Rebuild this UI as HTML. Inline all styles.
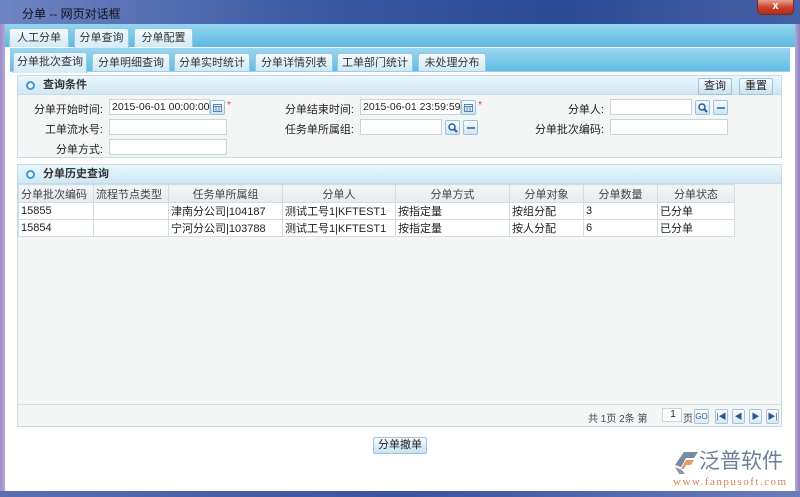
<!DOCTYPE html>
<html><head><meta charset="utf-8"><style>
*{margin:0;padding:0;box-sizing:border-box}
body{width:800px;height:497px;overflow:hidden;position:relative;font-family:"Liberation Sans","Noto Sans CJK SC",sans-serif;font-size:11px;color:#222;background:#5a6fa8}
.a{position:absolute}
#title{left:0;top:0;width:800px;height:24px;background:linear-gradient(90deg,#6f84c2,#3a58a2 40%,#2b4a95 70%,#4760a6);}
#title span{position:absolute;left:22px;top:5px;color:#111;font-size:12px}
#close{left:757px;top:0;width:37px;height:15px;background:linear-gradient(#e9a08e,#c9412a 55%,#b02e1a);border:1px solid #7a2a20;border-top:none;border-radius:0 0 5px 5px;color:#fff;font-weight:bold;text-align:center;font-size:11px;line-height:13px}
#lb{left:0;top:24px;width:5px;height:473px;background:linear-gradient(90deg,#9b8bc7,#b4a5d8)}
#rb{left:795px;top:24px;width:5px;height:473px;background:linear-gradient(90deg,#b4a5d8,#8f7fc0)}
#bb{left:0;top:491px;width:800px;height:6px;background:linear-gradient(90deg,#5b6fb0,#3a539f,#6a7cba)}
#main{left:5px;top:24px;width:790px;height:467px;background:#fff}
#t1{left:5px;top:24px;width:790px;height:23px;background:linear-gradient(#93d6ef,#5db9e2)}
#t2{left:10px;top:48px;width:780px;height:24px;background:linear-gradient(#9bd7ef,#62bce3);border-bottom:1px solid #9ccfe6}
.tab{position:absolute;height:19px;border:1px solid #9cc6de;border-bottom:none;border-radius:3px 3px 0 0;background:linear-gradient(#f4fbfe,#cfe9f7);color:#333;text-align:center;line-height:18px;font-size:11px}
.tab.on{background:linear-gradient(#eaf6fc,#d6edf9);height:22px}
.panel{position:absolute;left:17px;width:765px;border:1px solid #c6dbe6;background:#f4f6f6}
.ph{height:19px;background:linear-gradient(#eaf6fb,#cfe8f5);border-bottom:1px solid #c6dbe6;position:relative;font-weight:bold;color:#333;line-height:19px;padding-left:25px}
.ph i{position:absolute;left:8px;top:5px;width:9px;height:9px;border:2px solid #3a9ad6;border-radius:50%;background:#fff}
.lbl{position:absolute;text-align:right;color:#222}
.inp{position:absolute;height:16px;border:1px solid #c9d4da;background:#fff;font-size:10.5px;line-height:14px;padding-left:2px;overflow:hidden;white-space:nowrap}
.ib{position:absolute;width:15px;height:15px;border:1px solid #9cc2da;background:linear-gradient(#f4fbff,#cfe5f4);border-radius:2px}
.ib svg{position:absolute;left:2px;top:2px}
.star{position:absolute;color:#e33;font-size:10px}
.btn{position:absolute;height:17px;border:1px solid #9fc2d8;border-radius:2px;background:linear-gradient(#f5fbff,#c8e2f3);text-align:center;line-height:15px;font-size:11px;color:#222}
table{position:absolute;left:0;top:19px;border-collapse:collapse;font-size:11px}
td,th{height:16px;border:1px solid #d0dde4;padding:0 2px;white-space:nowrap;overflow:hidden}
th{font-weight:normal;color:#444;background:linear-gradient(#f3f6f7,#e4eaee);height:18px}
td{background:#fff}
.pg{position:absolute;top:244px;height:15px;border:1px solid #a9c3d8;background:linear-gradient(#fff,#d9e9f4);border-radius:2px;font-size:8px;color:#2a5a90;text-align:center;line-height:13px}
</style></head><body>
<div class="a" id="title"><span>分单 -- 网页对话框</span></div>
<div class="a" id="close">x</div>
<div class="a" id="lb"></div><div class="a" id="rb"></div><div class="a" id="bb"></div>
<div class="a" id="main"></div>
<div class="a" id="t1"></div>
<div class="tab" style="left:9px;top:28px;width:60px">人工分单</div>
<div class="tab on" style="left:74px;top:28px;width:55px;height:20px">分单查询</div>
<div class="tab" style="left:134px;top:28px;width:59px">分单配置</div>
<div class="a" id="t2"></div>
<div class="tab on" style="left:13px;top:52px;width:74px;height:21px">分单批次查询</div>
<div class="tab" style="left:92px;top:53px;width:78px;height:18px">分单明细查询</div>
<div class="tab" style="left:174px;top:53px;width:76px;height:18px">分单实时统计</div>
<div class="tab" style="left:255px;top:53px;width:78px;height:18px">分单详情列表</div>
<div class="tab" style="left:337px;top:53px;width:76px;height:18px">工单部门统计</div>
<div class="tab" style="left:418px;top:53px;width:68px;height:18px">未处理分布</div>

<div class="panel" style="top:75px;height:83px">
<div class="ph"><i></i>查询条件</div>
<div class="btn" style="left:680px;top:2px;width:34px">查询</div>
<div class="btn" style="left:721px;top:2px;width:34px">重置</div>
<div class="lbl" style="left:0;top:25px;width:85px">分单开始时间:</div>
<div class="inp" style="left:91px;top:23px;width:101px">2015-06-01 00:00:00</div>
<div class="ib" style="left:192px;top:24px"><svg width="9" height="9"><rect x="0.5" y="1.5" width="8" height="7" fill="none" stroke="#5a86b0"/><path d="M0 3.5H9M3 3v6M6 3v6" stroke="#5a86b0"/></svg></div><div class="star" style="left:209px;top:24px">*</div>
<div class="lbl" style="left:0;top:45px;width:85px">工单流水号:</div>
<div class="inp" style="left:91px;top:43px;width:118px"></div>
<div class="lbl" style="left:0;top:65px;width:85px">分单方式:</div>
<div class="inp" style="left:91px;top:63px;width:118px"></div>
<div class="lbl" style="left:240px;top:25px;width:96px">分单结束时间:</div>
<div class="inp" style="left:342px;top:23px;width:101px">2015-06-01 23:59:59</div>
<div class="ib" style="left:443px;top:24px"><svg width="9" height="9"><rect x="0.5" y="1.5" width="8" height="7" fill="none" stroke="#5a86b0"/><path d="M0 3.5H9M3 3v6M6 3v6" stroke="#5a86b0"/></svg></div><div class="star" style="left:460px;top:24px">*</div>
<div class="lbl" style="left:240px;top:45px;width:96px">任务单所属组:</div>
<div class="inp" style="left:342px;top:43px;width:82px"></div>
<div class="ib" style="left:427px;top:44px"><svg width="10" height="10"><circle cx="4" cy="4" r="3" fill="none" stroke="#2f5f90" stroke-width="1.5"/><path d="M6 6l3 3" stroke="#2f5f90" stroke-width="2"/></svg></div>
<div class="ib" style="left:445px;top:44px"><svg width="10" height="10"><path d="M1 5h8" stroke="#2f5f90" stroke-width="1.5"/></svg></div>
<div class="lbl" style="left:490px;top:25px;width:96px">分单人:</div>
<div class="inp" style="left:592px;top:23px;width:82px"></div>
<div class="ib" style="left:677px;top:24px"><svg width="10" height="10"><circle cx="4" cy="4" r="3" fill="none" stroke="#2f5f90" stroke-width="1.5"/><path d="M6 6l3 3" stroke="#2f5f90" stroke-width="2"/></svg></div>
<div class="ib" style="left:695px;top:24px"><svg width="10" height="10"><path d="M1 5h8" stroke="#2f5f90" stroke-width="1.5"/></svg></div>
<div class="lbl" style="left:490px;top:45px;width:96px">分单批次编码:</div>
<div class="inp" style="left:592px;top:43px;width:118px"></div>
</div>

<div class="panel" style="top:164px;height:263px">
<div class="ph"><i></i>分单历史查询</div>
<table>
<tr><th style="width:75px;text-align:left">分单批次编码</th><th style="width:75px;text-align:left">流程节点类型</th><th style="width:114px">任务单所属组</th><th style="width:113px">分单人</th><th style="width:114px">分单方式</th><th style="width:74px">分单对象</th><th style="width:74px">分单数量</th><th style="width:77px">分单状态</th></tr>
<tr><td>15855</td><td></td><td>津南分公司|104187</td><td>测试工号1|KFTEST1</td><td>按指定量</td><td>按组分配</td><td>3</td><td>已分单</td></tr>
<tr><td>15854</td><td></td><td>宁河分公司|103788</td><td>测试工号1|KFTEST1</td><td>按指定量</td><td>按人分配</td><td>6</td><td>已分单</td></tr>
</table>
<div class="a" style="left:0;top:239px;width:763px;border-top:1px solid #d0dde4"></div>
<div class="a" style="left:570px;top:245px;color:#445;font-size:10px">共 1页 2条 第</div>
<div class="inp" style="left:644px;top:243px;width:20px;height:14px;text-align:center;line-height:12px;font-size:10px">1</div>
<div class="a" style="left:665px;top:245px;color:#445;font-size:10px">页</div>
<div class="pg" style="left:676px;width:15px">GO</div>
<div class="pg" style="left:697px;width:13px">|◀</div>
<div class="pg" style="left:714px;width:13px">◀</div>
<div class="pg" style="left:731px;width:13px">▶</div>
<div class="pg" style="left:748px;width:13px">▶|</div>
</div>

<div class="btn" style="left:373px;top:437px;width:54px;height:17px">分单撤单</div>

<svg class="a" style="left:672px;top:451px" width="28" height="24" viewBox="0 0 28 24"><path d="M12 1 L26 1 L22 7 L14 7 L9 16 L3 14 Z" fill="#7a8aa0"/><path d="M9 18 L14 9 L22 9 L19 14 L14 14 L12 18 Z" fill="#e59a6a"/><path d="M3 16 L10 19 L13 23 L7 23 Z" fill="#8a98ac"/></svg>
<div class="a" style="left:699px;top:448px;font-size:21px;color:#6d7f98;font-family:'Noto Sans CJK SC',sans-serif;line-height:24px">泛普软件</div>
<div class="a" style="left:673px;top:476px;font-size:11px;color:#d88358;font-family:'Liberation Serif',serif;letter-spacing:1.5px">www.fanpusoft.com</div>
</body></html>
